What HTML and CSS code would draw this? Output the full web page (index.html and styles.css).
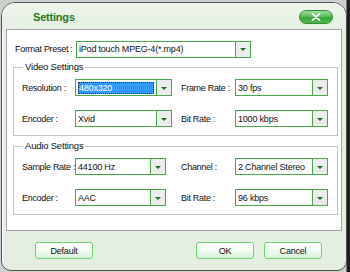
FILE: index.html
```html
<!DOCTYPE html>
<html>
<head>
<meta charset="utf-8">
<link rel="stylesheet" href="styles.css">
</head>
<body>
<div class="dialog">
  <div class="titlebar">
    <span class="title">Settings</span>
    <button class="close" aria-label="Close">
      <svg width="10" height="8" viewBox="0 0 10 8"><path d="M1.5 0.8 L8.5 7.2 M8.5 0.8 L1.5 7.2" stroke="#fff" stroke-width="1.8" stroke-linecap="round"/></svg>
    </button>
  </div>
  <div class="panel">
    <div class="preset-row">
      <span class="lbl preset-lbl">Format Preset :</span>
      <div class="select preset-sel"><span class="val">iPod touch MPEG-4(*.mp4)</span><span class="arrow"></span></div>
    </div>
    <fieldset class="group video">
      <legend>Video Settings</legend>
      <div class="grid">
        <span class="lbl">Resolution :</span>
        <div class="select w97"><span class="val"><span class="hl">480x320</span></span><span class="arrow"></span></div>
        <span class="lbl lbl2">Frame Rate :</span>
        <div class="select w93"><span class="val">30 fps</span><span class="arrow"></span></div>
        <span class="lbl">Encoder :</span>
        <div class="select w97"><span class="val">Xvid</span><span class="arrow"></span></div>
        <span class="lbl lbl2">Bit Rate :</span>
        <div class="select w93"><span class="val">1000 kbps</span><span class="arrow"></span></div>
      </div>
    </fieldset>
    <fieldset class="group audio">
      <legend>Audio Settings</legend>
      <div class="grid">
        <span class="lbl">Sample Rate :</span>
        <div class="select w91"><span class="val">44100 Hz</span><span class="arrow"></span></div>
        <span class="lbl lbl2">Channel :</span>
        <div class="select w93"><span class="val">2 Channel Stereo</span><span class="arrow"></span></div>
        <span class="lbl">Encoder :</span>
        <div class="select w91"><span class="val">AAC</span><span class="arrow"></span></div>
        <span class="lbl lbl2">Bit Rate :</span>
        <div class="select w93"><span class="val">96 kbps</span><span class="arrow"></span></div>
      </div>
    </fieldset>
  </div>
  <div class="buttons">
    <button class="btn btn-default">Default</button>
    <div class="spacer"></div>
    <button class="btn">OK</button>
    <button class="btn">Cancel</button>
  </div>
</div>
</body>
</html>
```
FILE: styles.css
```css
html, body {
  margin: 0;
  padding: 0;
}
body {
  width: 350px;
  height: 272px;
  overflow: hidden;
  background: linear-gradient(to right, #cfcfcf 0, #cfcfcf 346px, #1e1e1e 347px, #1e1e1e 350px);
  font-family: "Liberation Sans", Arial, sans-serif;
  font-size: 9px;
  letter-spacing: -0.2px;
  color: #111;
}
.dialog {
  box-sizing: border-box;
  margin: 2px 3px 0 1px;
  width: 346px;
  height: 269px;
  border: 1px solid #4d554d;
  border-radius: 14px 14px 10px 10px;
  background: #e4efe2;
  box-shadow: inset 1px 1px 0 #ffffff;
  display: flex;
  flex-direction: column;
}
.titlebar {
  height: 26px;
  display: flex;
  align-items: center;
  padding: 0 13px 0 31px;
  background: linear-gradient(#eef6ec, #e4efe2);
  border-radius: 13px 13px 0 0;
}
.title {
  flex: 1;
  font-weight: bold;
  font-size: 11px;
  color: #1d7a1d;
  letter-spacing: -0.2px;
  padding-top: 1px;
}
.close {
  width: 34px;
  height: 14px;
  border: 1px solid #2f8f2f;
  border-radius: 7px;
  background: linear-gradient(#9ee09e 0%, #5bc05b 45%, #36a536 55%, #4cb84c 100%);
  padding: 0;
  display: flex;
  align-items: center;
  justify-content: center;
  margin-top: 2px;
}
.close svg { display: block; }
.panel {
  box-sizing: border-box;
  margin: 0 4px 0 4px;
  height: 202px;
  border: 1px solid #a4a8a4;
  background: #ffffff;
  padding: 11px 3px 0 6px;
}
.preset-row {
  display: flex;
  align-items: center;
  height: 16px;
  padding-left: 2px;
}
.preset-lbl { width: 61px; }
.preset-sel { width: 175px; height: 16px; }
.lbl {
  white-space: nowrap;
  letter-spacing: -0.3px;
}
.select {
  box-sizing: border-box;
  height: 17px;
  border: 1px solid #4aa84a;
  background: #fff;
  display: flex;
  align-items: stretch;
}
.select .val {
  flex: 1;
  display: flex;
  align-items: center;
  padding-left: 2px;
  white-space: nowrap;
  overflow: hidden;
}
.select .arrow {
  width: 14px;
  border-left: 1px solid #4aa84a;
  background: #ececec;
  position: relative;
}
.select .arrow::after {
  content: "";
  position: absolute;
  left: 4px;
  top: 50%;
  margin-top: -1px;
  border-left: 3px solid transparent;
  border-right: 3px solid transparent;
  border-top: 3px solid #1c6e1c;
}
.hl {
  background: #3399ff;
  color: #fff;
  padding: 1px 42px 1px 1px;
  outline: 1px dotted #333;
  outline-offset: -1px;
}
.w97 { width: 97px; }
.w93 { width: 93px; }
.w91 { width: 91px; }
.group {
  margin: 4px 0 0 0;
  padding: 6px 8px 8px 8px;
  border: 1px solid #c3c6c3;
  box-shadow: 1px 1px 0 #ffffff inset;
  min-width: 0;
}
.group legend {
  padding: 0 2px;
  margin-left: 1px;
  line-height: 12px;
  font-size: 9.5px;
}
.grid {
  display: grid;
  grid-template-columns: 53px 97px 63px 93px;
  column-gap: 0;
  row-gap: 14px;
  align-items: center;
}
.lbl2 { margin-left: 9px; }
.buttons {
  display: flex;
  align-items: center;
  padding: 11px 0 0 33px;
  gap: 10px;
}
.spacer { width: 83px; }
.btn {
  box-sizing: border-box;
  width: 58px;
  height: 17px;
  border: 1px solid #6fd46f;
  border-radius: 3px;
  background: linear-gradient(#ffffff 0%, #f2fbf2 50%, #d6f0d6 100%);
  font-family: "Liberation Sans", Arial, sans-serif;
  font-size: 9px;
  letter-spacing: -0.2px;
  color: #111;
  padding: 0;
}
```
